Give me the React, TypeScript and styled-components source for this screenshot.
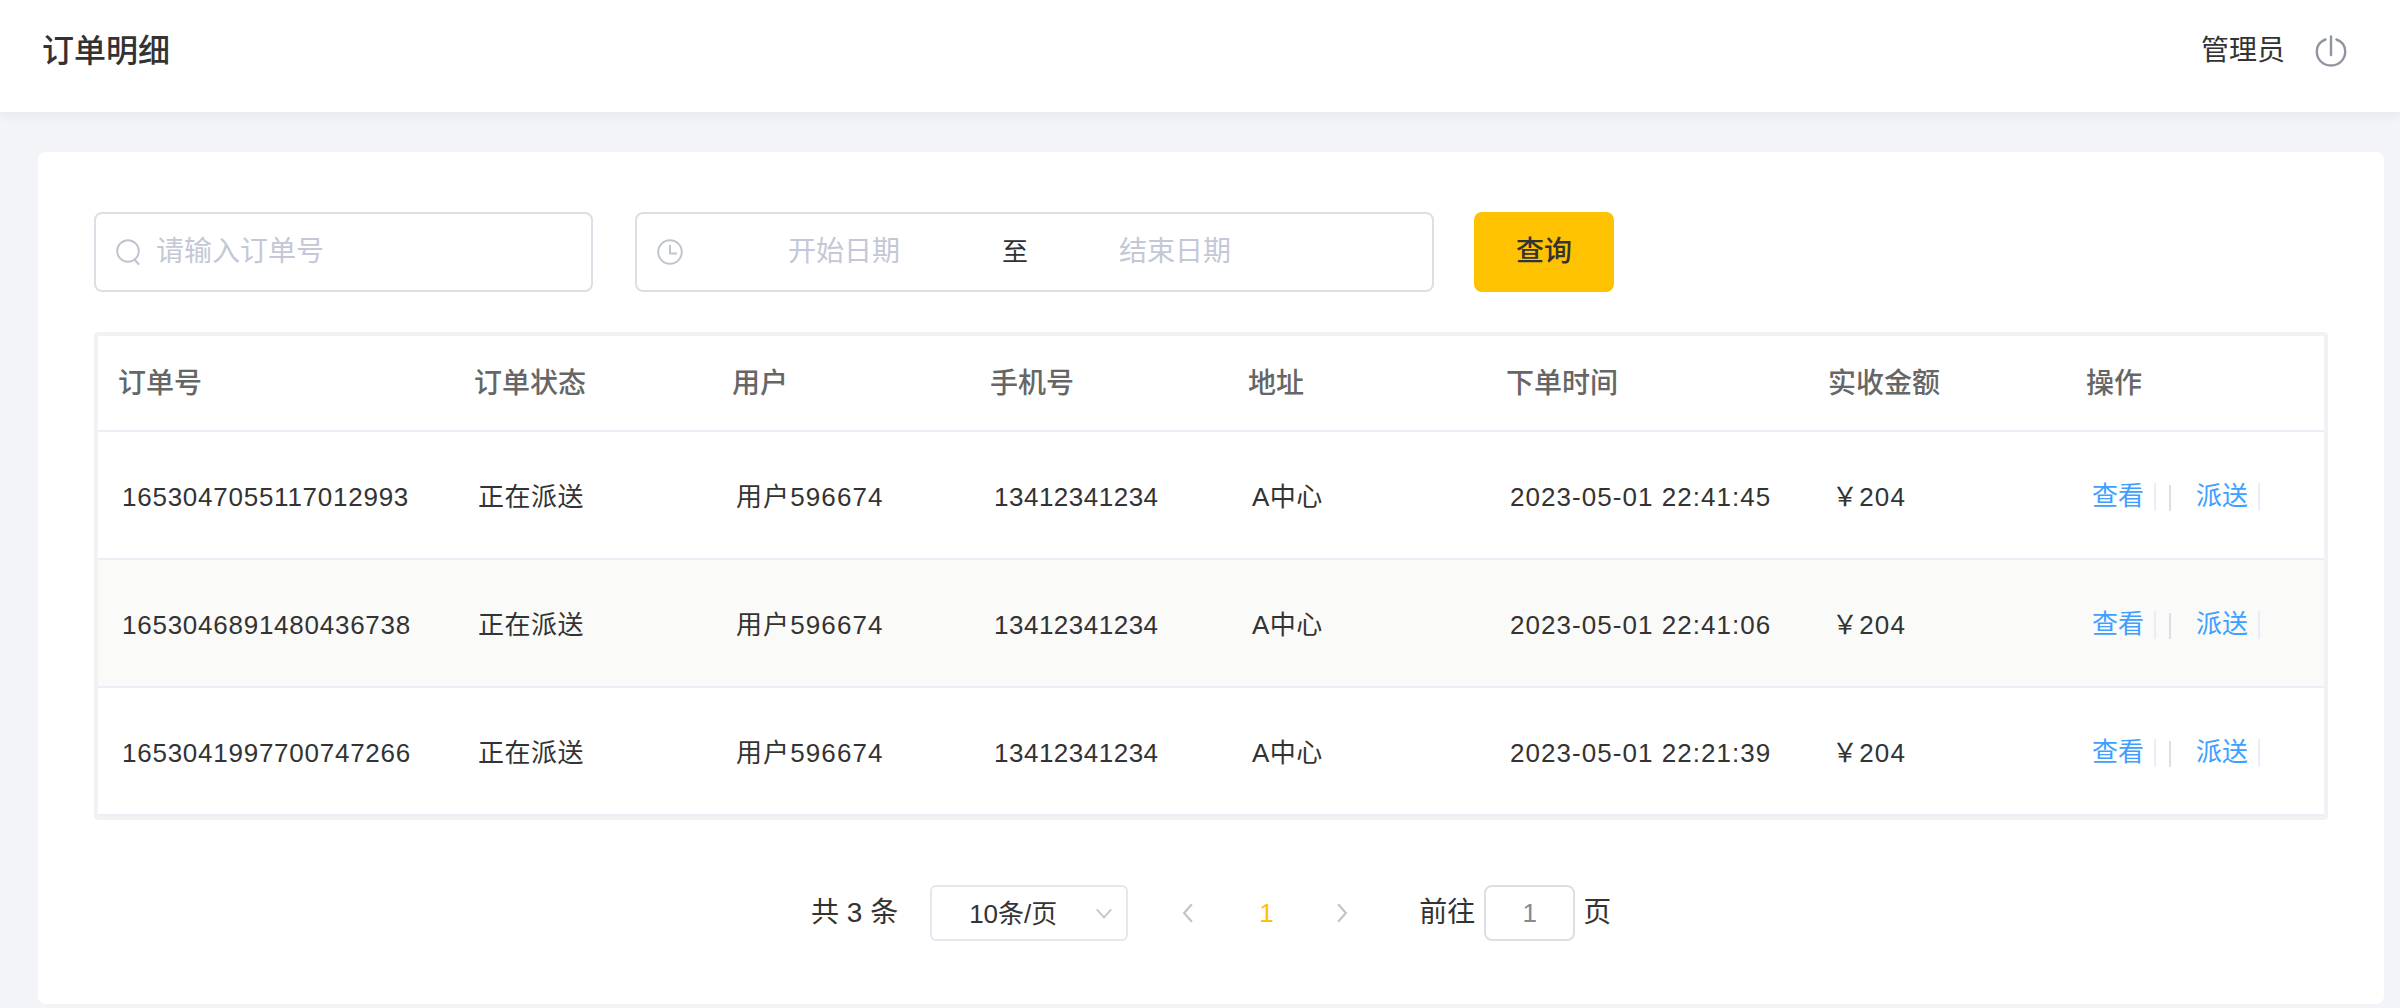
import React from "react";
import styled, { createGlobalStyle } from "styled-components";

const Global = createGlobalStyle`
  html, body { margin: 0; padding: 0; background: #f3f4f7; }
  body { font-family: "Liberation Sans", "Noto Sans CJK SC", sans-serif; color: #333; }
  * { box-sizing: border-box; }
`;

const Page = styled.div`
  width: 2400px;
  height: 1008px;
  overflow: hidden;
  display: flex;
  flex-direction: column;
`;
const TopBar = styled.header`
  height: 112px;
  flex: none;
  background: #fff;
  box-shadow: 0 2px 12px rgba(30, 40, 70, 0.07);
  display: flex;
  align-items: center;
  justify-content: space-between;
  padding: 0 53px 9px 42px;
`;
const Title = styled.h1`
  margin: 0 0 2px;
  font-size: 32px;
  font-weight: 500;
  line-height: 44px;
  color: #333;
`;
const UserBox = styled.div`
  display: flex;
  align-items: center;
  gap: 30px;
  margin-bottom: 2px;
`;
const UserName = styled.span`
  font-size: 28px;
  line-height: 40px;
  color: #333;
`;
const Main = styled.main`
  flex: 1;
  padding: 40px 16px 4px 38px;
  display: flex;
`;
const Card = styled.section`
  flex: 1;
  background: #fff;
  border-radius: 8px;
  padding: 60px 56px 0;
`;
const Toolbar = styled.div`
  display: flex;
  align-items: stretch;
  height: 80px;
  margin-bottom: 40px;
`;
const Field = styled.div<{ $width: number; $gap: number }>`
  width: ${(p) => p.$width}px;
  margin-right: ${(p) => p.$gap}px;
  border: 2px solid #dcdfe6;
  border-radius: 8px;
  display: flex;
  align-items: center;
  padding-left: 20px;
  background: #fff;
`;
const Placeholder = styled.span`
  font-size: 28px;
  line-height: 40px;
  color: #c4c8d6;
`;
const SearchText = styled(Placeholder)`
  margin-left: 15px;
`;
const RangePart = styled(Placeholder)<{ $width: number }>`
  width: ${(p) => p.$width}px;
  text-align: center;
`;
const RangeSep = styled.span`
  width: 60px;
  text-align: center;
  font-size: 26px;
  line-height: 40px;
  color: #303133;
`;
const ClockSlot = styled.span`
  display: flex;
  margin-right: 20px;
`;
const QueryButton = styled.button`
  width: 140px;
  border: 0;
  border-radius: 8px;
  background: #ffc200;
  color: #333;
  font: 500 28px/40px "Liberation Sans", "Noto Sans CJK SC", sans-serif;
  padding: 0;
`;
const TableWrap = styled.div`
  border: 4px solid #f0f2f6;
  border-radius: 4px;
  height: 488px;
`;
const Row = styled.div<{ $head?: boolean; $alt?: boolean }>`
  display: grid;
  grid-template-columns: 356px 258px 258px 258px 258px 322px 258px 258px;
  align-items: center;
  height: ${(p) => (p.$head ? 96 : 128)}px;
  background: ${(p) => (p.$alt ? "#fafaf8" : "#fff")};
  border-bottom: 2px solid #ebeef5;
  padding-top: ${(p) => (p.$head ? 2 : 4)}px;
`;
const HeadCell = styled.div`
  padding-left: 20px;
  font-size: 28px;
  font-weight: 500;
  line-height: 40px;
  color: #666;
`;
const Cell = styled.div<{ $ls?: number }>`
  padding-left: 24px;
  font-size: 26px;
  line-height: 40px;
  color: #333;
  letter-spacing: ${(p) => p.$ls ?? 0.5}px;
  white-space: nowrap;
`;
const Actions = styled.div`
  display: flex;
  align-items: center;
  padding-left: 26px;
  height: 28px;
`;
const ActionLink = styled.a<{ $left?: number }>`
  font-size: 26px;
  line-height: 28px;
  color: #409eff;
  width: 52px;
  margin-left: ${(p) => p.$left ?? 0}px;
  margin-top: -3px;
  white-space: nowrap;
`;
const Bar = styled.i<{ $dark?: boolean; $left: number }>`
  display: block;
  width: 2px;
  height: ${(p) => (p.$dark ? 26 : 28)}px;
  margin-left: ${(p) => p.$left}px;
  align-self: flex-end;
  background: ${(p) => (p.$dark ? "#dcdfe6" : "#e8eef5")};
`;
const Pager = styled.nav`
  display: flex;
  align-items: center;
  height: 56px;
  margin-top: 65px;
  padding-left: 717px;
`;
const PagerText = styled.span<{ $gap?: number; $left?: number }>`
  font-size: 28px;
  line-height: 36px;
  color: #333;
  white-space: nowrap;
  margin-left: ${(p) => p.$left ?? 0}px;
  margin-right: ${(p) => p.$gap ?? 0}px;
`;
const SizeSelect = styled.div`
  width: 198px;
  height: 56px;
  border: 2px solid #e4e7ed;
  border-radius: 6px;
  display: flex;
  align-items: center;
  justify-content: space-between;
  padding: 0 13px 4px 37px;
  font-size: 26px;
  color: #333;
`;
const SizeArrow = styled.span`
  display: flex;
  margin-top: 4px;
`;
const PagerArrow = styled.span<{ $left: number }>`
  display: flex;
  margin-left: ${(p) => p.$left}px;
`;
const PageNumber = styled.span`
  width: 14px;
  margin-left: 60px;
  font-size: 26px;
  color: #ffc200;
  text-align: center;
`;
const JumpBox = styled.div`
  width: 91px;
  height: 56px;
  border: 2px solid #dcdfe6;
  border-radius: 8px;
  display: flex;
  align-items: center;
  justify-content: center;
  font-size: 26px;
  color: #858a96;
  margin: 0 8px 0 9px;
`;
const Svg = styled.svg<{ $stroke: string; $sw?: number }>`
  display: block;
  flex: none;
  fill: none;
  stroke: ${(p) => p.$stroke};
  stroke-width: ${(p) => p.$sw ?? 2}px;
`;

const PowerIcon = () => (
  <Svg $stroke="#8f94a0" $sw={2.4} width="32" height="32" viewBox="0 0 32 32" strokeLinecap="round">
    <path d="M10.5 4.5C5 6.5 1.8 11 1.8 16.5C1.8 24.5 8 30.5 16 30.5C24 30.5 30.2 24.5 30.2 16.5C30.2 11 27 6.5 21.5 4.5" />
    <path d="M16 1.5V20" />
  </Svg>
);
const SearchIcon = () => (
  <Svg $stroke="#c0c4d0" width="25" height="26" viewBox="0 0 25 26" strokeLinecap="round">
    <circle cx="12" cy="12" r="10.8" />
    <path d="M18.5 20.5L22.5 25" />
  </Svg>
);
const ClockIcon = () => (
  <Svg $stroke="#c0c4d0" width="26" height="26" viewBox="0 0 26 26">
    <circle cx="13" cy="13" r="11.8" />
    <path d="M13 6V14.5H20" />
  </Svg>
);
const Chevron = ({ dir, color, size }: { dir: "l" | "r" | "d"; color: string; size: number }) => (
  <Svg $stroke={color} width={size} height={size} viewBox="0 0 20 20">
    {dir === "l" && <path d="M13.5 2L6.5 10L13.5 18" />}
    {dir === "r" && <path d="M6.5 2L13.5 10L6.5 18" />}
    {dir === "d" && <path d="M2 6L10 15L18 6" />}
  </Svg>
);

const heads = ["订单号", "订单状态", "用户", "手机号", "地址", "下单时间", "实收金额", "操作"];
const rows = [
  ["1653047055117012993", "2023-05-01 22:41:45"],
  ["1653046891480436738", "2023-05-01 22:41:06"],
  ["1653041997700747266", "2023-05-01 22:21:39"],
];

export default function App() {
  return (
    <Page>
      <Global />
      <TopBar>
        <Title>订单明细</Title>
        <UserBox>
          <UserName>管理员</UserName>
          <PowerIcon />
        </UserBox>
      </TopBar>
      <Main>
        <Card>
          <Toolbar>
            <Field $width={499} $gap={42}>
              <SearchIcon />
              <SearchText>请输入订单号</SearchText>
            </Field>
            <Field $width={799} $gap={40}>
              <ClockSlot>
                <ClockIcon />
              </ClockSlot>
              <RangePart $width={282}>开始日期</RangePart>
              <RangeSep>至</RangeSep>
              <RangePart $width={260}>结束日期</RangePart>
            </Field>
            <QueryButton>查询</QueryButton>
          </Toolbar>
          <TableWrap>
            <Row $head>
              {heads.map((h) => (
                <HeadCell key={h}>{h}</HeadCell>
              ))}
            </Row>
            {rows.map(([id, time], i) => (
              <Row key={id} $alt={i === 1}>
                <Cell $ls={0.75}>{id}</Cell>
                <Cell>正在派送</Cell>
                <Cell $ls={1.1}>用户596674</Cell>
                <Cell>13412341234</Cell>
                <Cell>A中心</Cell>
                <Cell $ls={1.05}>{time}</Cell>
                <Cell $ls={1.2}>￥204</Cell>
                <Actions>
                  <ActionLink>查看</ActionLink>
                  <Bar $left={10} />
                  <Bar $dark $left={13} />
                  <ActionLink $left={25}>派送</ActionLink>
                  <Bar $left={10} />
                </Actions>
              </Row>
            ))}
          </TableWrap>
          <Pager>
            <PagerText $gap={32}>共 3 条</PagerText>
            <SizeSelect>
              10条/页
              <SizeArrow>
                <Chevron dir="d" color="#c0c4cc" size={18} />
              </SizeArrow>
            </SizeSelect>
            <PagerArrow $left={49}>
              <Chevron dir="l" color="#c0c4cc" size={22} />
            </PagerArrow>
            <PageNumber>1</PageNumber>
            <PagerArrow $left={58}>
              <Chevron dir="r" color="#c0c4cc" size={22} />
            </PagerArrow>
            <PagerText $left={66}>前往</PagerText>
            <JumpBox>1</JumpBox>
            <PagerText>页</PagerText>
          </Pager>
        </Card>
      </Main>
    </Page>
  );
}
